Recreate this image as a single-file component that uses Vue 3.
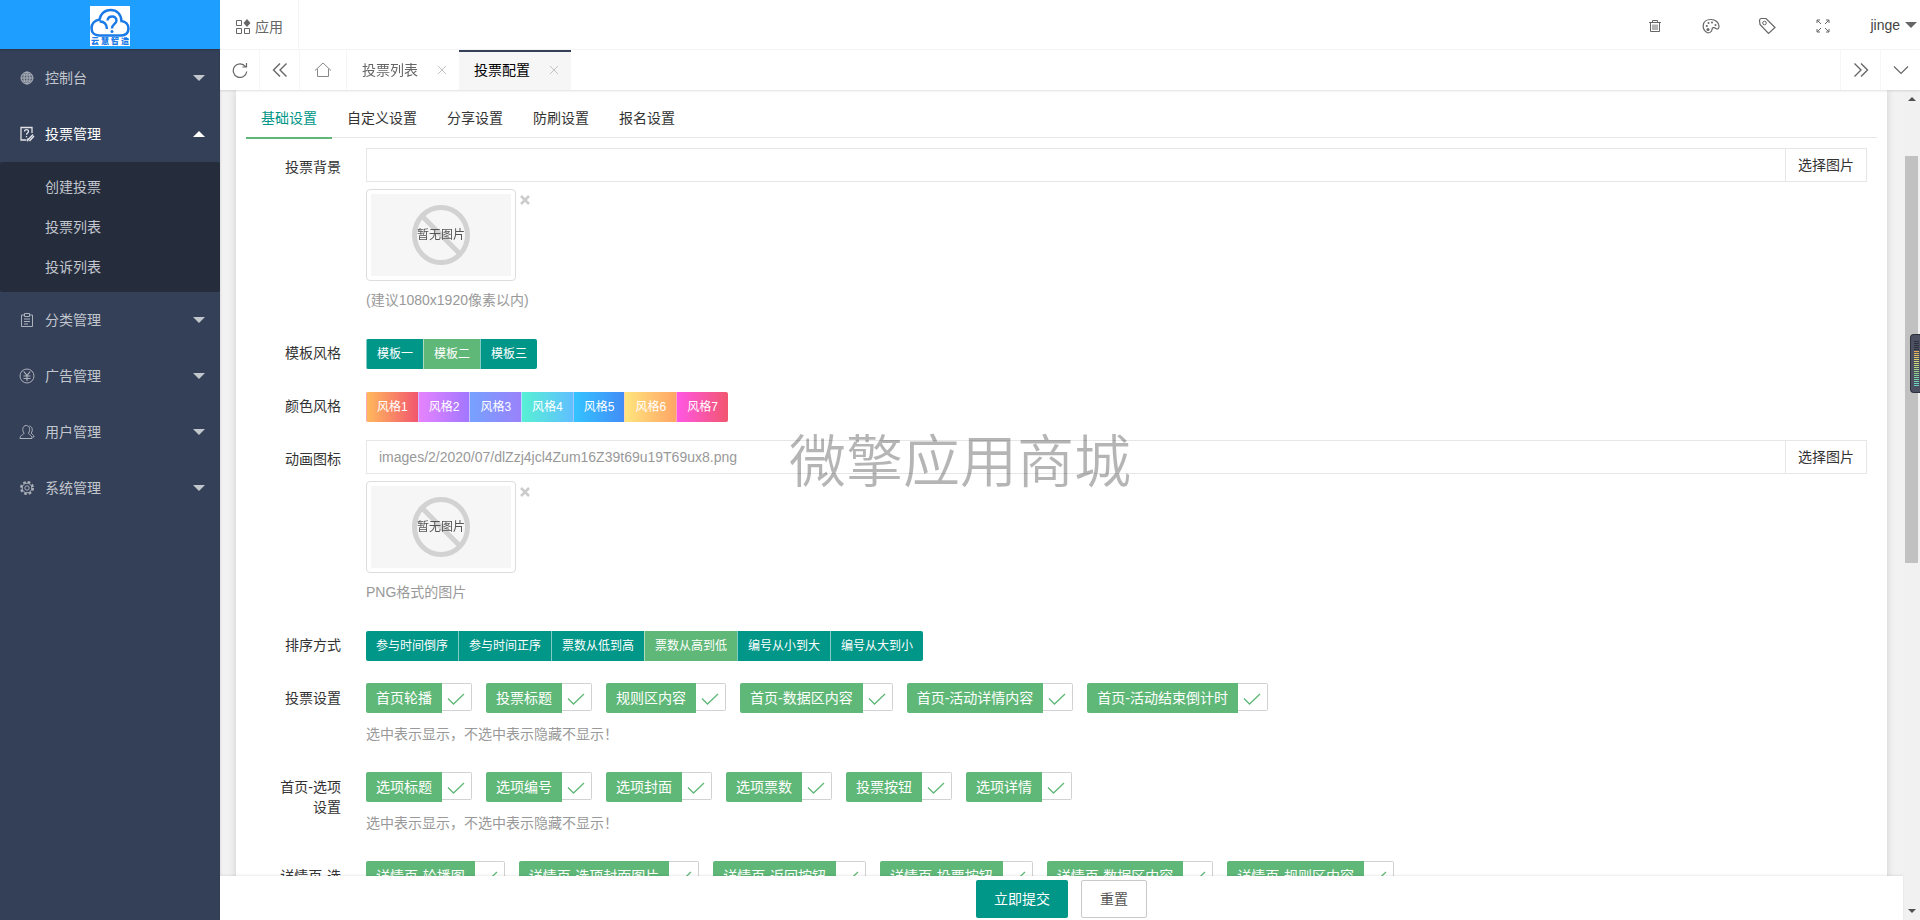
<script setup>
import { ref } from 'vue'

const menu = [
  { icon: 'globe', name: '控制台' },
  { icon: 'vote', name: '投票管理', open: true, children: ['创建投票', '投票列表', '投诉列表'] },
  { icon: 'clip', name: '分类管理' },
  { icon: 'yen', name: '广告管理' },
  { icon: 'user', name: '用户管理' },
  { icon: 'gear', name: '系统管理' }
]

const tabs = ['基础设置', '自定义设置', '分享设置', '防刷设置', '报名设置']
const activeTab = ref(0)

const templates = ['模板一', '模板二', '模板三']
const template = ref(1)
const styles = ['风格1', '风格2', '风格3', '风格4', '风格5', '风格6', '风格7']
const orders = ['参与时间倒序', '参与时间正序', '票数从低到高', '票数从高到低', '编号从小到大', '编号从大到小']
const order = ref(3)

const background = ref('')
const animation = ref('images/2/2020/07/dlZzj4jcl4Zum16Z39t69u19T69ux8.png')

const toggle = (name) => ({ name, on: true })
const checkRows = ref([
  {
    label: '投票设置',
    items: ['首页轮播', '投票标题', '规则区内容', '首页-数据区内容', '首页-活动详情内容', '首页-活动结束倒计时'].map(toggle)
  },
  {
    label: '首页-选项设置',
    items: ['选项标题', '选项编号', '选项封面', '选项票数', '投票按钮', '选项详情'].map(toggle)
  },
  {
    label: '详情页-选项设置',
    items: ['详情页-轮播图', '详情页-选项封面图片', '详情页-返回按钮', '详情页-投票按钮', '详情页-数据区内容', '详情页-规则区内容'].map(toggle)
  }
])
</script>

<template>
  <div class="layout">
    <aside class="side">
      <a href="#" class="logo" aria-label="首页">
        <svg width="40" height="40" viewBox="0 0 40 40">
          <rect width="40" height="40" fill="#fff" />
          <path d="M9 29.500H31C36 29.500 38.500 26.500 38.500 22.500C38.500 18.500 35.500 15.500 31.500 15C31 8 26.500 4 20.500 4C14.500 4 10 8.500 9.500 13.500C4.500 14.500 1.500 18 1.500 22C1.500 26.500 4.500 29.500 9 29.500Z" fill="none" stroke="#1a7be8" stroke-width="2.600" />
          <path d="M9.500 15.500C14 15 17 18.500 17 23" fill="none" stroke="#1a7be8" stroke-width="2.400" />
          <path d="M17.500 14.500C18 9.500 26.500 9 26.500 14.500C26.500 18 22 18 22 22.500" fill="none" stroke="#1a7be8" stroke-width="2.400" />
          <circle cx="22" cy="25.500" r="1.500" fill="#1a7be8" />
          <g class="logo-text" text-anchor="middle">
            <text x="5" y="38">云</text><text x="15" y="38">慧</text><text x="25" y="38">智</text><text x="35" y="38">造</text>
          </g>
        </svg>
      </a>
      <nav>
        <div v-for="m in menu" :key="m.name">
          <a href="#" class="item" :class="{ open: m.open }">
            <svg class="ico" width="16" height="16" viewBox="0 0 16 16" fill="none" stroke="currentColor">
              <g v-if="m.icon === 'globe'">
                <circle cx="8" cy="8" r="6" fill="currentColor" fill-opacity=".3" />
                <ellipse cx="8" cy="8" rx="3" ry="6" />
                <path d="M8 2V14M2 8H14M3 5H13M3 11H13" />
              </g>
              <g v-else-if="m.icon === 'vote'">
                <path d="M13 7V1.500H2V14H7.500" stroke-width="1.300" />
                <path d="M5.500 5.500C5.500 3 9.500 3 9.500 5.500C9.500 7 7.500 7 7.500 8.800M7.500 10V11.300" stroke-width="1.300" />
                <path d="M9 13.800L14 8.500M10.500 15L15 10M8.500 15.300L9 12.500" stroke-width="1.500" />
              </g>
              <g v-else-if="m.icon === 'clip'">
                <path d="M5.500 3H2.500V14.500H13.500V3H10.500M5.500 1.500H10.500V4.500H5.500Z" />
                <path d="M5 7H11M5 9.500H11M5 12H9" />
              </g>
              <g v-else-if="m.icon === 'yen'">
                <circle cx="8" cy="8" r="7" />
                <path d="M4.800 3.500L8 7.500L11.200 3.500M8 7.500V13M4.500 8H11.500M4.500 10.500H11.500" stroke-width="1.200" />
              </g>
              <g v-else-if="m.icon === 'user'">
                <path d="M5 9C2.800 6.500 3.500 1.500 7.200 1.500C11 1.500 11.500 6.500 9.500 9C9.500 11 13 10.500 13 14.500H1C1 10.500 5 11 5 9Z" />
                <path d="M10.500 2C13.500 2.500 14 6.500 12.300 9C12.500 10.500 15 10.500 15 13H13.500" />
              </g>
              <g v-else>
                <circle cx="8" cy="8" r="6" stroke-width="2" stroke-dasharray="2.700 2.012" />
                <circle cx="8" cy="8" r="4.800" />
                <circle cx="8" cy="8" r="2.200" />
              </g>
            </svg>
            <span>{{ m.name }}</span>
            <i class="caret" :class="{ up: m.open }"></i>
          </a>
          <div v-if="m.children" class="sub">
            <a v-for="c in m.children" :key="c" href="#">{{ c }}</a>
          </div>
        </div>
      </nav>
    </aside>

    <div class="main">
      <header class="top">
        <a href="#" class="apps">
          <svg width="16" height="16" viewBox="0 0 16 16" fill="none" stroke="currentColor">
            <path d="M1.500 1.500H6.500V6.500H1.500ZM1.500 9.500H6.500V14.500H1.500ZM9.500 9.500H14.500V14.500H9.500Z" />
            <path d="M12 0L15.500 4L12 8L8.500 4Z" fill="currentColor" stroke="none" />
          </svg>
          <span>应用</span>
        </a>
        <div class="tools">
          <button class="tool" aria-label="清除缓存">
            <svg width="14" height="14" viewBox="0 0 14 14" fill="none" stroke="currentColor">
              <path d="M1 3.500H13M4.500 3V1.500H9.500V3M2.500 4V12.500H11.500V4M5 5.500V11M7 5.500V11M9 5.500V11" />
            </svg>
          </button>
          <button class="tool" aria-label="主题">
            <svg width="18" height="18" viewBox="0 0 18 18" fill="none" stroke="currentColor">
              <path d="M5 15.500C2.500 14 1 11.500 1.200 8.500C1.500 5 4.500 2.500 9 2.500C13.500 2.500 17 5.500 17 9C17 12 15.500 12.500 14 11.500C12 10 10 10.500 10 12.500C10 14.500 7.500 16.500 5 15.500Z" stroke-width="1.200" />
              <g fill="currentColor" stroke="none">
                <circle cx="6" cy="12.500" r="1.500" /><circle cx="4.800" cy="9" r="1.100" /><circle cx="6.500" cy="6" r="1" />
                <circle cx="10" cy="5.500" r="1" /><circle cx="13.500" cy="8" r="1" />
              </g>
            </svg>
          </button>
          <button class="tool" aria-label="便签">
            <svg width="18" height="18" viewBox="0 0 18 18" fill="none" stroke="currentColor">
              <path d="M2 7.500L1.500 3.500Q1.500 2 3 1.500L8 1.500L17 10.500L10.500 16.500Z" stroke-width="1.200" />
              <circle cx="6.500" cy="6" r="1.800" />
            </svg>
          </button>
          <button class="tool" aria-label="全屏">
            <svg width="14" height="14" viewBox="0 0 14 14" fill="none" stroke="currentColor">
              <path d="M1 4V1H4M10 1H13V4M13 10V13H10M4 13H1V10M1 1L5 5M13 1L9 5M13 13L9 9M1 13L5 9" />
            </svg>
          </button>
          <a href="#" class="account"><span>jinge</span><i class="caret"></i></a>
        </div>
      </header>

      <div class="pagetabs">
        <button class="nav-btn" aria-label="刷新">
          <svg width="16" height="16" viewBox="0 0 16 16" fill="none" stroke="currentColor">
            <path d="M13.500 4.500A6.800 6.800 0 1 0 14.800 9.500M14.500 1V5H10.500" stroke-width="1.200" />
          </svg>
        </button>
        <button class="nav-btn" aria-label="向左">
          <svg width="16" height="16" viewBox="0 0 16 16" fill="none" stroke="currentColor" stroke-width="1.400">
            <path d="M8 1.500L1.500 8L8 14.500M14.500 1.500L8 8L14.500 14.500" />
          </svg>
        </button>
        <a href="#" class="home" aria-label="主页">
          <svg width="18" height="16" viewBox="0 0 18 16" fill="none" stroke="currentColor">
            <path d="M1 8.500L9 1L17 8.500M3.500 7V14.500H14.500V7" />
          </svg>
        </a>
        <div class="ptab"><a href="#">投票列表</a><button class="close" aria-label="关闭投票列表"><svg width="8" height="8" viewBox="0 0 8 8" stroke="currentColor"><path d="M0 0L8 8M8 0L0 8" /></svg></button></div>
        <div class="ptab current"><a href="#">投票配置</a><button class="close" aria-label="关闭投票配置"><svg width="8" height="8" viewBox="0 0 8 8" stroke="currentColor"><path d="M0 0L8 8M8 0L0 8" /></svg></button></div>
        <div class="spacer"></div>
        <button class="nav-btn end" aria-label="向右">
          <svg width="16" height="16" viewBox="0 0 16 16" fill="none" stroke="currentColor" stroke-width="1.400">
            <path d="M1.500 1.500L8 8L1.500 14.500M8 1.500L14.500 8L8 14.500" />
          </svg>
        </button>
        <button class="nav-btn end" aria-label="更多">
          <svg width="16" height="16" viewBox="0 0 16 16" fill="none" stroke="currentColor" stroke-width="1.200">
            <path d="M1 4.500L8 11.500L15 4.500" />
          </svg>
        </button>
      </div>

      <div class="stage">
        <form class="page" @submit.prevent>
          <div class="scroll">
            <div class="card">
              <div class="tabs">
                <button v-for="(t, i) in tabs" :key="t" type="button" :class="{ on: i === activeTab }" @click="activeTab = i">{{ t }}</button>
              </div>
              <div class="form">
                <div class="row">
                  <label class="label" for="bg">投票背景</label>
                  <div class="field">
                    <div class="picker"><input id="bg" v-model="background" type="text" /><button type="button">选择图片</button></div>
                    <div class="preview">
                      <div class="thumb"><div class="empty">
                        <svg width="60" height="62" viewBox="0 0 60 62" fill="none" stroke="#d2d2d2" stroke-width="5"><ellipse cx="30" cy="31" rx="26.500" ry="27.500" /><path d="M11 12L49 50" /></svg>
                        <span>暂无图片</span>
                      </div></div>
                      <button type="button" class="remove" aria-label="移除图片"><svg width="10" height="10" viewBox="0 0 10 10" stroke="currentColor" stroke-width="2.500"><path d="M1 1L9 9M9 1L1 9" /></svg></button>
                    </div>
                    <p class="help">(建议1080x1920像素以内)</p>
                  </div>
                </div>
                <div class="row">
                  <span class="label">模板风格</span>
                  <div class="field inset">
                    <div class="group edged"><button v-for="(t, i) in templates" :key="t" type="button" :class="{ on: i === template }" @click="template = i">{{ t }}</button></div>
                  </div>
                </div>
                <div class="row">
                  <span class="label">颜色风格</span>
                  <div class="field inset">
                    <div class="group edged"><button v-for="(s, i) in styles" :key="s" type="button" :class="'tone' + (i + 1)">{{ s }}</button></div>
                  </div>
                </div>
                <div class="row">
                  <label class="label" for="anim">动画图标</label>
                  <div class="field">
                    <div class="picker"><input id="anim" v-model="animation" type="text" /><button type="button">选择图片</button></div>
                    <div class="preview">
                      <div class="thumb"><div class="empty">
                        <svg width="60" height="62" viewBox="0 0 60 62" fill="none" stroke="#d2d2d2" stroke-width="5"><ellipse cx="30" cy="31" rx="26.500" ry="27.500" /><path d="M11 12L49 50" /></svg>
                        <span>暂无图片</span>
                      </div></div>
                      <button type="button" class="remove" aria-label="移除图片"><svg width="10" height="10" viewBox="0 0 10 10" stroke="currentColor" stroke-width="2.500"><path d="M1 1L9 9M9 1L1 9" /></svg></button>
                    </div>
                    <p class="help">PNG格式的图片</p>
                  </div>
                </div>
                <div class="row">
                  <span class="label">排序方式</span>
                  <div class="field inset">
                    <div class="group"><button v-for="(o, i) in orders" :key="o" type="button" :class="{ on: i === order }" @click="order = i">{{ o }}</button></div>
                  </div>
                </div>
                <div v-for="r in checkRows" :key="r.label" class="row">
                  <span class="label">{{ r.label }}</span>
                  <div class="field">
                    <div class="checks">
                      <label v-for="c in r.items" :key="c.name" class="check">
                        <input v-model="c.on" type="checkbox" />
                        <span class="name">{{ c.name }}</span>
                        <span class="box"><svg width="18" height="12" viewBox="0 0 18 12" fill="none" stroke="currentColor" stroke-width="1.300"><path d="M1 5.500L6.500 11L17 1" /></svg></span>
                      </label>
                    </div>
                    <p class="help">选中表示显示，不选中表示隐藏不显示！</p>
                  </div>
                </div>
              </div>
            </div>
          </div>
          <footer class="actions">
            <button type="submit" class="primary">立即提交</button>
            <button type="reset" class="plain">重置</button>
          </footer>
        </form>
        <div class="bar" aria-hidden="true">
          <i class="arrow up"></i>
          <div class="track"><div class="thumb-bar"></div></div>
          <i class="arrow down"></i>
        </div>
      </div>
    </div>

    <div class="meter" aria-hidden="true"><div class="ticks"></div></div>
    <div class="watermark">微擎应用商城</div>
  </div>
</template>

<style>
html, body, #app { height: 100%; }
body { overflow: hidden; }
</style>

<style scoped>
.layout, .layout * { box-sizing: border-box; }
.layout {
  display: flex; height: 100%; background: #f2f2f2; color: #333;
  font: 14px/20px "Liberation Sans", "Noto Sans CJK SC", sans-serif;
}
a { color: inherit; text-decoration: none; }
button { font: inherit; color: inherit; background: none; border: 0; padding: 0; margin: 0; cursor: pointer; }
svg { display: block; flex: none; }
p { margin: 0; }

.side { width: 220px; flex: none; background: #344058; color: #c2c6cd; box-shadow: 1px 0 2px rgba(0, 0, 0, .08); }
.logo { display: flex; justify-content: center; height: 49px; padding-top: 6px; background: #1e9fff; box-shadow: 0 1px 2px rgba(0, 0, 0, .2); margin-bottom: 1px; }
.logo-text { font: 900 8px "Noto Sans CJK SC", sans-serif; fill: #1a7be8; }
.item { display: flex; align-items: center; height: 56px; padding: 0 15px 0 19px; }
.item .ico { margin-right: 10px; opacity: .85; }
.item .caret { margin-left: auto; }
.item.open { color: #fff; }
.caret { border: 6px solid transparent; border-top-color: currentColor; border-bottom: 0; }
.caret.up { border-top: 0; border-bottom: 6px solid currentColor; }
.sub { padding: 5px 0; background: #252d3d; border-radius: 2px; }
.sub a { display: block; line-height: 40px; padding-left: 45px; }

.main { flex: 1; min-width: 0; display: flex; flex-direction: column; }
.top { display: flex; justify-content: space-between; height: 50px; background: #fff; border-bottom: 1px solid #f6f6f6; color: #666; flex: none; }
.apps { display: flex; align-items: center; gap: 4px; padding: 4px 15px 0; border-right: 1px solid #f6f6f6; }
.tools { display: flex; align-items: center; padding-right: 3px; }
.tool { width: 56px; height: 50px; display: flex; align-items: center; justify-content: center; padding-top: 2px; }
.account { display: flex; align-items: center; gap: 5px; padding-left: 19px; color: #444; }
.account .caret { color: #666; }
.pagetabs { position: relative; z-index: 1; display: flex; height: 40px; flex: none; background: #fff; box-shadow: 0 1px 2px rgba(0, 0, 0, .12); color: #666; }
.nav-btn { width: 40px; border-right: 1px solid #f6f6f6; display: flex; align-items: center; justify-content: center; }
.nav-btn.end { border-right: 0; border-left: 1px solid #f6f6f6; }
.home { width: 47px; border-right: 1px solid #f6f6f6; display: flex; align-items: center; justify-content: center; color: #888; }
.ptab { width: 112px; display: flex; align-items: center; justify-content: space-between; padding: 0 13px 0 15px; }
.ptab.current { background: #f6f6f6; color: #000; border-top: 2px solid #344058; padding-bottom: 2px; }
.close { width: 8px; height: 8px; color: #c2c2c2; }
.spacer { flex: 1; }

.stage { flex: 1; min-height: 0; display: flex; }
.page { flex: 1; min-width: 0; display: flex; flex-direction: column; }
.scroll { flex: 1; min-height: 0; overflow: hidden; padding: 0 16px; }
.card { background: #fff; padding: 8px 10px; box-shadow: 0 0 8px rgba(0, 0, 0, .15); }
.tabs { display: flex; height: 40px; border-bottom: 1px solid #e6e6e6; }
.tabs button { height: 41px; padding: 0 15px; line-height: 40px; border-bottom: 2px solid transparent; }
.tabs button.on { color: #009688; border-bottom-color: #5fb878; }
.form { padding: 10px; }
.row { display: flex; margin-bottom: 15px; }
.label { width: 100px; flex: none; padding: 9px 15px; text-align: right; }
.field { flex: 1; min-width: 0; padding-left: 10px; }
.inset { padding-top: 5px; }
.picker { display: flex; height: 34px; border: 1px solid #e6e6e6; }
.picker input { flex: 1; min-width: 0; border: 0; outline: 0; padding: 0 12px; font: inherit; color: #999; background: #fff; }
.picker button { width: 81px; border-left: 1px solid #e6e6e6; }
.preview { display: flex; gap: 4px; padding-top: 7px; }
.thumb { width: 150px; height: 92px; padding: 4px; border: 1px solid #ddd; border-radius: 4px; background: #fff; }
.empty { display: grid; place-items: center; height: 100%; background: #f6f6f6; }
.empty > * { grid-area: 1 / 1; }
.empty span { font-size: 12px; z-index: 1; color: #555; }
.remove { height: 10px; margin-top: 6px; color: #ccc; }
.help { padding: 9px 0; color: #999; }
.group { display: flex; border-radius: 2px; overflow: hidden; width: max-content; }
.group button { height: 30px; padding: 0 10px; font-size: 12px; line-height: 30px; color: #fff; background: #009688; border-left: 1px solid rgba(255, 255, 255, .5); }
.group button:first-child { border-left: 0; }
.group.edged button:first-child { border-left: 1px solid rgba(255, 255, 255, .5); }
.group button.on { background: #5fb878; }
.group .tone1 { background: linear-gradient(90deg, #ffb85c, #f2566f); }
.group .tone2 { background: linear-gradient(90deg, #e683ff, #a177ff); }
.group .tone3 { background: linear-gradient(90deg, #76a1ff, #9a82fb); }
.group .tone4 { background: linear-gradient(90deg, #57f0d4, #60bfff); }
.group .tone5 { background: linear-gradient(90deg, #33c3ff, #438df7); }
.group .tone6 { background: linear-gradient(90deg, #ffe57d, #ffa565); }
.group .tone7 { background: linear-gradient(90deg, #ff57e4, #f2566f); }
.checks { display: flex; flex-wrap: wrap; gap: 6px 14px; padding: 4px 0 2px; }
.check { position: relative; display: flex; height: 30px; cursor: pointer; }
.check input { position: absolute; opacity: 0; margin: 0; }
.name { padding: 0 10px; line-height: 30px; color: #fff; background: #d2d2d2; border-radius: 2px 0 0 2px; }
.box { width: 30px; height: 28px; display: flex; align-items: center; justify-content: center; border: 1px solid #d2d2d2; border-left: 0; border-radius: 0 2px 2px 0; color: #fff; padding: 3px 1px 0 0; }
.check input:checked ~ .name { background: #5fb878; }
.check input:checked ~ .box { color: #5fb878; }

.actions { position: relative; display: flex; justify-content: center; gap: 13px; height: 44px; padding-top: 4px; background: #fff; box-shadow: 0 -1px 2px rgba(0, 0, 0, .08); flex: none; }
.actions button { height: 38px; padding: 0 18px; border-radius: 2px; }
.actions .primary { background: #009688; color: #fff; }
.actions .plain { background: #fff; border: 1px solid #c9c9c9; color: #555; }

.bar { width: 17px; display: flex; flex-direction: column; align-items: center; background: #f1f1f1; padding: 7px 0; }
.track { flex: 1; width: 13px; margin: 5px 0; }
.thumb-bar { width: 13px; height: 51%; margin-top: 50px; background: #c1c1c1; }
.arrow { border: 4px solid transparent; }
.arrow.up { border-top: 0; border-bottom-color: #505050; }
.arrow.down { border-bottom: 0; border-top-color: #505050; }

.meter { position: fixed; right: 0; top: 334px; width: 10px; height: 59px; padding: 6px 1px 6px 3px; background: #4c5060; border: 1px solid #2c303c; border-right: 0; border-radius: 4px 0 0 4px; }
.ticks { height: 100%; background: repeating-linear-gradient(180deg, transparent 0 1px, #4c5060 1px 2px), linear-gradient(180deg, #2c303c 0 22%, #e9a94f 22%, #d9da72 45%, #8ed08c 72%, #62d3c8 100%); }
.watermark { position: fixed; inset: 0; display: grid; place-items: center; padding-bottom: 6px; pointer-events: none; font: 350 57px/60px "Noto Sans CJK SC", sans-serif; color: rgba(0, 0, 0, .29); }
</style>
